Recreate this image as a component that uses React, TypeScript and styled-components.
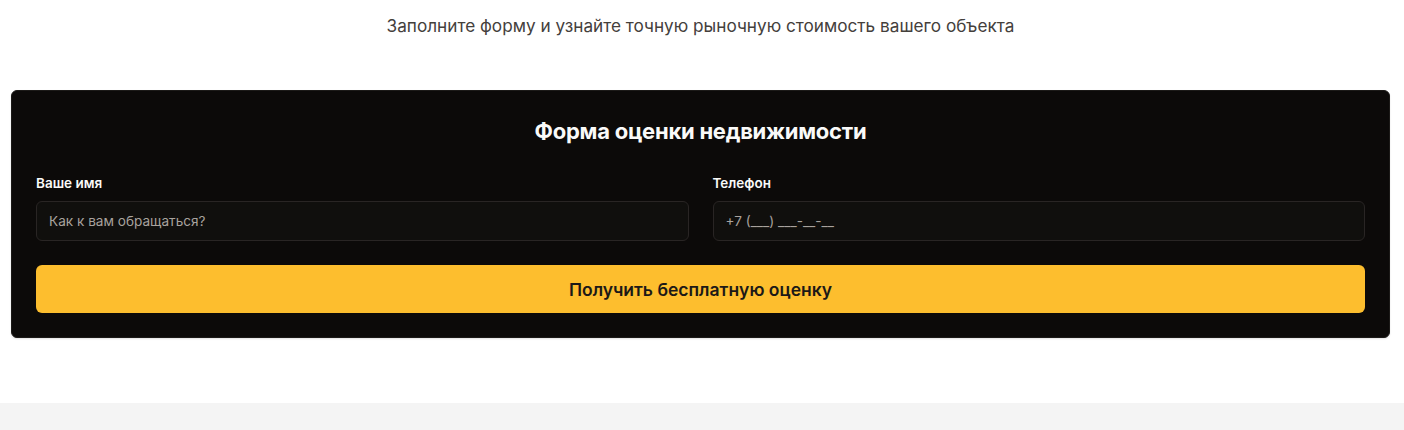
import React from 'react';
import styled, { createGlobalStyle } from 'styled-components';

const GlobalStyle = createGlobalStyle`
    * {
        box-sizing: border-box;
    }

    body {
        margin: 0;
        background: #fff;
        font-family: Inter, 'Noto Sans', sans-serif;
        -webkit-font-smoothing: antialiased;
    }
`;

const App = () => {
    return (
        <>
            <GlobalStyle />
            <Section>
                <Subtitle>Заполните форму и узнайте точную рыночную стоимость вашего объекта</Subtitle>
                <Card>
                    <Title>Форма оценки недвижимости</Title>
                    <Fields>
                        <Field>
                            <Label htmlFor="name">Ваше имя</Label>
                            <Input id="name" type="text" placeholder="Как к вам обращаться?" />
                        </Field>
                        <Field>
                            <Label htmlFor="phone">Телефон</Label>
                            <Input id="phone" type="tel" placeholder="+7 (___) ___-__-__" />
                        </Field>
                    </Fields>
                    <Submit type="button">Получить бесплатную оценку</Submit>
                </Card>
            </Section>
            <Footer />
        </>
    );
};

const Section = styled.section`
    padding: 12px 14px 65px 11px;
    background: #fff;
`;

const Subtitle = styled.p`
    margin: 0 0 50px;
    text-align: center;
    font-size: 17.2px;
    line-height: 28px;
    color: #44403c;
`;

const Card = styled.div`
    display: flex;
    flex-direction: column;
    gap: 24px;
    padding: 24px;
    background: #0c0a09;
    border: 1px solid #1c1a18;
    border-radius: 6px;
    box-shadow: 0 1px 2px rgba(0, 0, 0, 0.12);
`;

const Title = styled.h2`
    margin: 0 0 2px;
    text-align: center;
    font-size: 22px;
    line-height: 32px;
    font-weight: 700;
    letter-spacing: -0.25px;
    color: #fafaf9;
`;

const Fields = styled.div`
    display: grid;
    grid-template-columns: repeat(2, 1fr);
    gap: 24px;
`;

const Field = styled.div`
    display: flex;
    flex-direction: column;
    gap: 8px;
`;

const Label = styled.label`
    font-size: 13.5px;
    line-height: 20px;
    font-weight: 600;
    color: #fafaf9;
`;

const Input = styled.input`
    height: 40px;
    padding: 0 12px;
    background: #100f0d;
    border: 1px solid #292524;
    border-radius: 6px;
    font-family: inherit;
    font-size: 13.6px;
    color: #fafaf9;
    outline: none;

    &::placeholder {
        color: #a8a29e;
    }
`;

const Submit = styled.button`
    height: 48px;
    border: none;
    border-radius: 6px;
    background: #fdbe2e;
    font-family: inherit;
    font-size: 17.5px;
    font-weight: 600;
    color: #1c1917;
    cursor: pointer;
`;

const Footer = styled.div`
    height: 40px;
    background: #f4f4f4;
`;

export default App;
